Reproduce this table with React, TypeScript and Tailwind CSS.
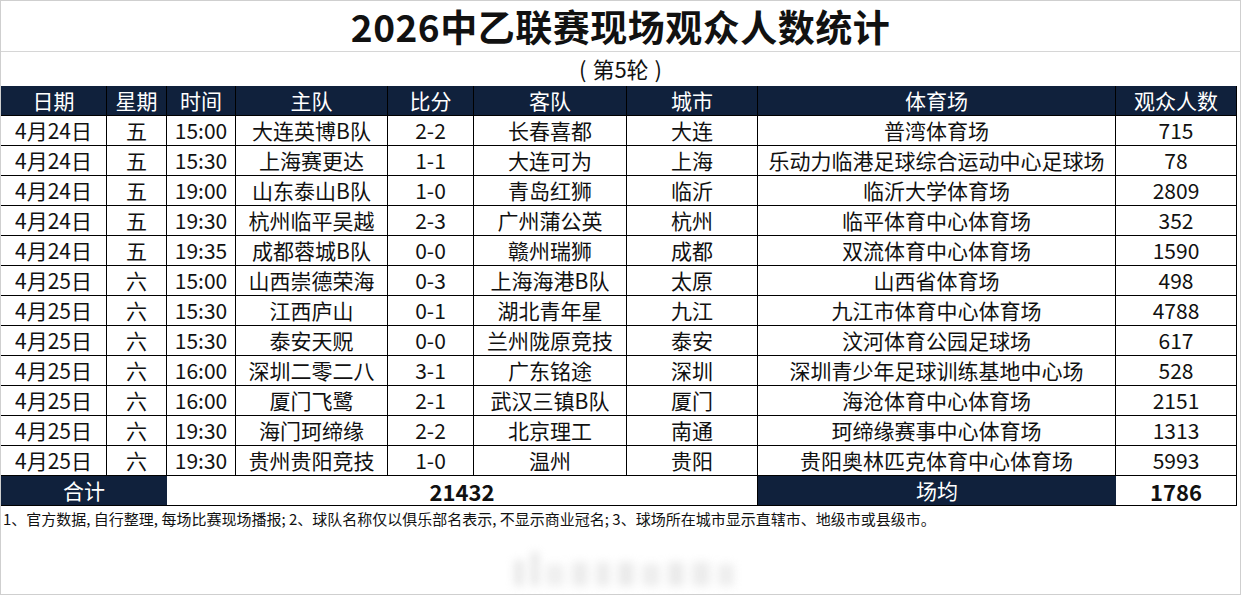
const ROWS: string[][] = [
  ["4月24日", "五", "15:00", "大连英博B队", "2-2", "长春喜都", "大连", "普湾体育场", "715"],
  ["4月24日", "五", "15:30", "上海赛更达", "1-1", "大连可为", "上海", "乐动力临港足球综合运动中心足球场", "78"],
  ["4月24日", "五", "19:00", "山东泰山B队", "1-0", "青岛红狮", "临沂", "临沂大学体育场", "2809"],
  ["4月24日", "五", "19:30", "杭州临平吴越", "2-3", "广州蒲公英", "杭州", "临平体育中心体育场", "352"],
  ["4月24日", "五", "19:35", "成都蓉城B队", "0-0", "赣州瑞狮", "成都", "双流体育中心体育场", "1590"],
  ["4月25日", "六", "15:00", "山西崇德荣海", "0-3", "上海海港B队", "太原", "山西省体育场", "498"],
  ["4月25日", "六", "15:30", "江西庐山", "0-1", "湖北青年星", "九江", "九江市体育中心体育场", "4788"],
  ["4月25日", "六", "15:30", "泰安天贶", "0-0", "兰州陇原竞技", "泰安", "汶河体育公园足球场", "617"],
  ["4月25日", "六", "16:00", "深圳二零二八", "3-1", "广东铭途", "深圳", "深圳青少年足球训练基地中心场", "528"],
  ["4月25日", "六", "16:00", "厦门飞鹭", "2-1", "武汉三镇B队", "厦门", "海沧体育中心体育场", "2151"],
  ["4月25日", "六", "19:30", "海门珂缔缘", "2-2", "北京理工", "南通", "珂缔缘赛事中心体育场", "1313"],
  ["4月25日", "六", "19:30", "贵州贵阳竞技", "1-0", "温州", "贵阳", "贵阳奥林匹克体育中心体育场", "5993"],
]

const HEAD = ["日期", "星期", "时间", "主队", "比分", "客队", "城市", "体育场", "观众人数"]

const GRID = "grid grid-cols-[106px_60px_69px_152px_86px_153px_131px_358px_121px]"

export default function App() {
  return (
    <div
      className="relative w-[1241px] h-[597px] bg-white text-[#111]"
      style={{ fontFamily: '"Noto Sans CJK SC", "Noto Sans", sans-serif' }}
    >
      <div className="h-[595px] border border-[#cfcfcf] flex flex-col">
        {/* Title */}
        <div className="h-[51px] border-b border-[#d6d6d6] flex items-center justify-center">
          <h1 className="text-[37px] font-bold leading-none tracking-[0.5px]">2026中乙联赛现场观众人数统计</h1>
        </div>
        <div className="h-[34px] pb-[2px] flex items-center justify-center text-[22px] leading-none">
          <span>(</span>
          <span className="mx-[6px]">第5轮</span>
          <span>)</span>
        </div>

        {/* Table */}
        <div className="w-[1236px] text-[21px] leading-none">
          <div className={`${GRID} h-[30px] bg-[#10213c] text-white`}>
            {HEAD.map((h) => (
              <div key={h} className="flex items-center justify-center border-r border-b border-black">
                {h}
              </div>
            ))}
          </div>
          {ROWS.map((r, i) => (
            <div key={i} className={`${GRID} h-[30px]`}>
              {r.map((c, j) => (
                <div key={j} className="flex items-center justify-center border-r border-b border-black whitespace-nowrap">
                  {c}
                </div>
              ))}
            </div>
          ))}
          <div className={`${GRID} h-[30px]`}>
            <div className="col-span-2 flex items-center justify-center bg-[#10213c] text-white border-b border-black">合计</div>
            <div className="col-span-5 flex items-center justify-center font-bold text-[22px] border-r border-b border-black">21432</div>
            <div className="flex items-center justify-center bg-[#10213c] text-white border-b border-black">场均</div>
            <div className="flex items-center justify-center font-bold text-[22px] border-r border-b border-black">1786</div>
          </div>
        </div>

        {/* Footnote */}
        <p className="mt-[5px] pl-[2px] text-[15px] leading-none whitespace-nowrap">
          1、官方数据, 自行整理, 每场比赛现场播报; 2、球队名称仅以俱乐部名表示, 不显示商业冠名; 3、球场所在城市显示直辖市、地级市或县级市。
        </p>
      </div>

      {/* blurred watermark */}
      <div className="absolute left-[514px] top-[552px] flex items-end gap-[8px] blur-[4px] opacity-40">
        <div className="w-[10px] h-[26px] bg-[#c8c8c8]" />
        <div className="w-[6px] h-[34px] bg-[#b0b0b0]" />
        <div className="w-[18px] h-[22px] bg-[#d8d8d8]" />
        <div className="w-[16px] h-[24px] bg-[#d0d0d0]" />
        <div className="w-[14px] h-[24px] bg-[#d0d0d0]" />
        <div className="w-[16px] h-[24px] bg-[#cccccc]" />
        <div className="w-[18px] h-[22px] bg-[#d4d4d4]" />
        <div className="w-[16px] h-[24px] bg-[#cccccc]" />
        <div className="w-[18px] h-[24px] bg-[#d0d0d0]" />
        <div className="w-[16px] h-[22px] bg-[#d4d4d4]" />
      </div>
    </div>
  )
}
